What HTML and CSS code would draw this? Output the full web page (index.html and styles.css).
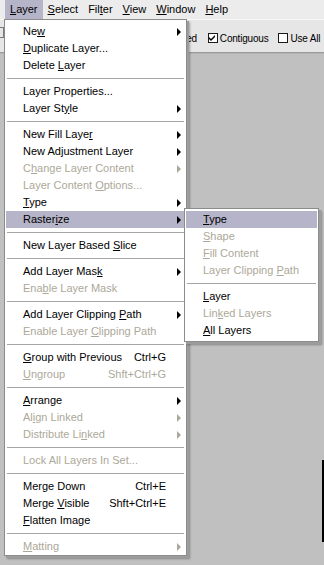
FILE: index.html
```html
<!DOCTYPE html>
<html lang="en">
<head>
    <meta charset="UTF-8">
    <meta name="viewport" content="width=device-width, initial-scale=1.0">
    <title>Layer menu</title>
    <link rel="stylesheet" href="styles.css">
</head>
<body>
    <div class="app">
        <div class="menubar">
            <span class="top-item active"><u>L</u>ayer</span>
            <span class="top-item"><u>S</u>elect</span>
            <span class="top-item">Fil<u>t</u>er</span>
            <span class="top-item"><u>V</u>iew</span>
            <span class="top-item"><u>W</u>indow</span>
            <span class="top-item"><u>H</u>elp</span>
        </div>

        <div class="toolbar">
            <span class="tool-stub"></span>
            <span class="opt aa">Anti-aliased</span>
            <label class="opt check-opt"><span class="box"><svg width="7" height="7" viewBox="0 0 7 7"><path d="M0 2 L2 4 L6 0 L6 2 L2 6 L0 4 Z" fill="#000"/></svg></span>Contiguous</label>
            <label class="opt check-opt"><span class="box"></span>Use All</label>
        </div>

        <div class="workspace">
            <div class="doc-window"></div>
        </div>

        <!-- Layer dropdown -->
        <div class="menu main-menu">
            <div class="item"><span>Ne<u>w</u></span><i class="arrow"></i></div>
            <div class="item"><span><u>D</u>uplicate Layer...</span></div>
            <div class="item"><span>Delete <u>L</u>ayer</span></div>
            <div class="sep"></div>
            <div class="item"><span>Layer Properties...</span></div>
            <div class="item"><span>Layer St<u>y</u>le</span><i class="arrow"></i></div>
            <div class="sep"></div>
            <div class="item"><span>New Fill Laye<u>r</u></span><i class="arrow"></i></div>
            <div class="item"><span>New Ad<u>j</u>ustment Layer</span><i class="arrow"></i></div>
            <div class="item off"><span>C<u>h</u>ange Layer Content</span><i class="arrow"></i></div>
            <div class="item off"><span>Layer Content <u>O</u>ptions...</span></div>
            <div class="item"><span><u>T</u>ype</span><i class="arrow"></i></div>
            <div class="item hot"><span>Raster<u>i</u>ze</span><i class="arrow"></i></div>
            <div class="sep"></div>
            <div class="item"><span>New Layer Based <u>S</u>lice</span></div>
            <div class="sep"></div>
            <div class="item"><span>Add Layer Mas<u>k</u></span><i class="arrow"></i></div>
            <div class="item off"><span>Ena<u>b</u>le Layer Mask</span></div>
            <div class="sep"></div>
            <div class="item"><span>Add Layer Clipping <u>P</u>ath</span><i class="arrow"></i></div>
            <div class="item off"><span>Enable Layer <u>C</u>lipping Path</span></div>
            <div class="sep"></div>
            <div class="item"><span><u>G</u>roup with Previous</span><span class="key">Ctrl+G</span></div>
            <div class="item off"><span><u>U</u>ngroup</span><span class="key">Shft+Ctrl+G</span></div>
            <div class="sep"></div>
            <div class="item"><span><u>A</u>rrange</span><i class="arrow"></i></div>
            <div class="item off"><span>Al<u>i</u>gn Linked</span><i class="arrow"></i></div>
            <div class="item off"><span>Distribute Li<u>n</u>ked</span><i class="arrow"></i></div>
            <div class="sep"></div>
            <div class="item off"><span>Lock All Layers In Set...</span></div>
            <div class="sep"></div>
            <div class="item"><span>Merge Down</span><span class="key">Ctrl+E</span></div>
            <div class="item"><span>Merge <u>V</u>isible</span><span class="key">Shft+Ctrl+E</span></div>
            <div class="item"><span><u>F</u>latten Image</span></div>
            <div class="sep"></div>
            <div class="item off"><span><u>M</u>atting</span><i class="arrow"></i></div>
        </div>

        <!-- Rasterize submenu -->
        <div class="menu sub-menu">
            <div class="item hot"><span><u>T</u>ype</span></div>
            <div class="item off"><span><u>S</u>hape</span></div>
            <div class="item off"><span><u>F</u>ill Content</span></div>
            <div class="item off"><span>Layer Clipping <u>P</u>ath</span></div>
            <div class="sep"></div>
            <div class="item"><span><u>L</u>ayer</span></div>
            <div class="item off"><span>Lin<u>k</u>ed Layers</span></div>
            <div class="item"><span><u>A</u>ll Layers</span></div>
        </div>
    </div>
</body>
</html>
```

FILE: styles.css
```css
* {
    box-sizing: border-box;
}
body {
    margin: 0;
    font-family: "Liberation Sans", Arial, sans-serif;
    font-size: 11px;
    color: #000;
    background-color: #c0c0c0;
}
u {
    text-underline-offset: 1px;
}
.app {
    position: relative;
    width: 324px;
    height: 565px;
    overflow: hidden;
    display: flex;
    flex-direction: column;
}
.menubar {
    height: 19px;
    padding-left: 5px;
    display: flex;
    background-color: #ececec;
}
.top-item {
    padding: 0 5px;
    line-height: 19px;
}
.top-item.active {
    background-color: #b6b4c8;
}
.toolbar {
    height: 34px;
    display: flex;
    align-items: center;
    background-color: #e6e6e6;
    border-top: 1px solid #f8f8f8;
    border-bottom: 1px solid #9a9a9a;
    padding-top: 4px;
    font-size: 10px;
    letter-spacing: -0.2px;
}
.tool-stub {
    width: 4px;
    height: 11px;
    border: 1px solid #7a7a7a;
    border-left: none;
    margin-top: -12px;
}
.opt {
    display: flex;
    align-items: center;
    white-space: nowrap;
}
.aa {
    margin-left: 143px;
}
.check-opt {
    margin-left: 11px;
}
.check-opt + .check-opt {
    margin-left: 10px;
}
.box {
    width: 10px;
    height: 10px;
    border: 1px solid #1a1a1a;
    background-color: #fff;
    margin-right: 2px;
    display: flex;
    align-items: center;
    justify-content: center;
}
.workspace {
    flex: 1;
    position: relative;
    background-color: #c0c0c0;
    border-top: 1px solid #b4b4b4;
}
.doc-window {
    position: absolute;
    left: 322px;
    top: 406px;
    width: 40px;
    height: 82px;
    border: 1px solid #000;
    border-left-width: 2px;
}
.menu {
    position: absolute;
    background-color: #fff;
    border: 1px solid #8c8c8c;
    box-shadow: 2px 2px 0 #9c9c9c, 3px 3px 2px rgba(0, 0, 0, 0.3);
}
.main-menu {
    left: 4px;
    top: 19px;
    width: 183px;
    padding: 3px 1px 0;
}
.sub-menu {
    left: 184px;
    top: 208px;
    width: 135px;
    padding: 2px 1px;
}
.item {
    height: 17px;
    line-height: 17px;
    padding: 0 4px 0 17px;
    display: flex;
    align-items: center;
    white-space: nowrap;
}
.item.hot {
    background-color: #b6b4c8;
}
.item.off {
    color: #aca899;
}
.key {
    margin-left: auto;
    margin-right: 15px;
}
.arrow {
    margin-left: auto;
    width: 0;
    height: 0;
    border-left: 4px solid #000;
    border-top: 4px solid transparent;
    border-bottom: 4px solid transparent;
}
.item.off .arrow {
    border-left-color: #aca899;
}
.sep {
    height: 1px;
    margin: 4px 1px;
    background-color: #a6a6a6;
}
```
